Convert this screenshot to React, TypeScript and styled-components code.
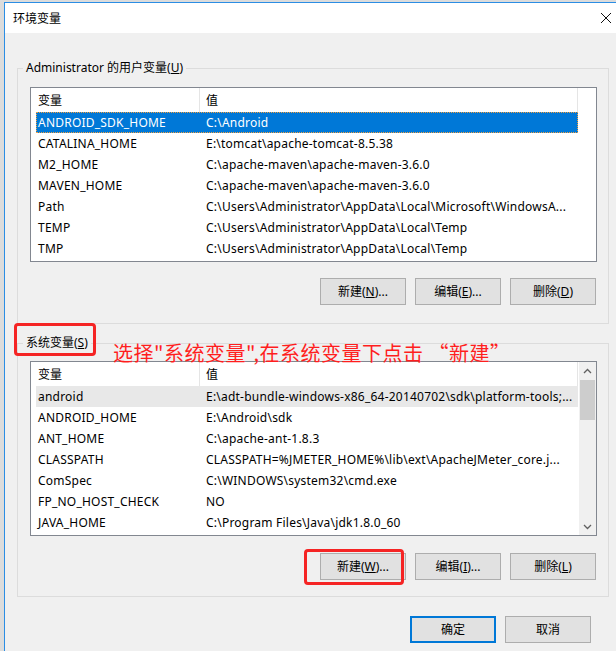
import React from "react";
import styled, { createGlobalStyle } from "styled-components";

const GlobalStyle = createGlobalStyle`
  html, body { margin: 0; padding: 0; }
  body {
    background: #dcdcdc;
    font-family: "Microsoft YaHei UI", "Noto Sans", "Noto Sans CJK SC", sans-serif;
    font-size: 12px;
    color: #000;
  }
  * { box-sizing: border-box; }
`;

const Screen = styled.div`
  width: 616px;
  height: 651px;
  padding: 2px 0 0 4px;
  overflow: hidden;
`;

const Dialog = styled.div`
  width: 612px;
  height: 649px;
  background: #f0f0f0;
  border-left: 1px solid #2b8de4;
  border-top: 1px solid #2b8de4;
  display: flex;
  flex-direction: column;
`;

const TitleBar = styled.div`
  height: 30px;
  background: #fff;
  display: flex;
  align-items: center;
  justify-content: space-between;
  padding: 0 4px 0 8px;
  font-size: 12px;
  flex-shrink: 0;
`;

const TitleText = styled.span`
  line-height: 16px;
  padding-top: 1px;
`;

const CloseIcon = styled.svg`
  width: 12px;
  height: 12px;
  display: block;
`;

const Body = styled.div`
  padding: 27px 7px 0 12px;
  display: flex;
  flex-direction: column;
`;

const Group = styled.fieldset<{ $gap?: number }>`
  margin: ${(p) => p.$gap ?? 0}px 0 0 0;
  padding: 0;
  border: 1px solid #dcdcdc;
  min-width: 0;
  width: 592px;
`;

const Legend = styled.legend`
  margin-left: 5px;
  padding: 0 3px;
  font-size: 12px;
  line-height: 16px;
  position: relative;
`;

const GroupContent = styled.div<{ $top: number; $bottom: number }>`
  padding: ${(p) => p.$top}px 12px ${(p) => p.$bottom}px 12px;
  display: flex;
  flex-direction: column;
`;

const ListBox = styled.div`
  width: 567px;
  height: 175px;
  border: 1px solid #828790;
  background: #fff;
  display: flex;
  overflow: hidden;
`;

const ListBody = styled.div`
  width: 542px;
  margin-left: 5px;
  display: flex;
  flex-direction: column;
  flex-shrink: 0;
`;

const HeaderRow = styled.div<{ $height: number }>`
  display: grid;
  grid-template-columns: 164px 378px;
  height: ${(p) => p.$height}px;
`;

const HeaderCell = styled.div<{ $pad: number }>`
  border-right: 1px solid #e5e5e5;
  padding-left: ${(p) => p.$pad}px;
  display: flex;
  align-items: center;
  padding-bottom: 1px;
  white-space: nowrap;
`;

const Row = styled.div<{ $state?: "selected" | "inactive" }>`
  display: grid;
  grid-template-columns: 164px 378px;
  height: 21px;
  align-items: center;
  white-space: nowrap;
  background: ${(p) =>
    p.$state === "selected" ? "#0078d7" : p.$state === "inactive" ? "#e8e8e8" : "transparent"};
  color: ${(p) => (p.$state === "selected" ? "#fff" : "#000")};
  outline: ${(p) => (p.$state === "selected" ? "1px dotted #f0a040" : "none")};
  outline-offset: -1px;
`;

const Cell = styled.div<{ $pad: number }>`
  padding-left: ${(p) => p.$pad}px;
  overflow: hidden;
  white-space: nowrap;
  line-height: 21px;
  letter-spacing: 0.22px;
`;

const ScrollBar = styled.div`
  width: 17px;
  margin-left: auto;
  background: #f0f0f0;
  display: flex;
  flex-direction: column;
  flex-shrink: 0;
`;

const ScrollArrow = styled.div`
  height: 17px;
  display: flex;
  align-items: center;
  justify-content: center;
`;

const ScrollTrack = styled.div`
  flex: 1;
  padding: 1px 1px 0 1px;
`;

const Thumb = styled.div`
  height: 40px;
  background: #cdcdcd;
`;

const ButtonRow = styled.div<{ $top: number; $right?: number }>`
  display: flex;
  justify-content: flex-end;
  gap: 9px;
  margin-top: ${(p) => p.$top}px;
  padding-right: ${(p) => p.$right ?? 0}px;
`;

const Button = styled.button<{ $primary?: boolean }>`
  position: relative;
  width: 86px;
  height: 27px;
  background: #e1e1e1;
  border: ${(p) => (p.$primary ? "2px solid #0078d7" : "1px solid #adadad")};
  font-family: inherit;
  font-size: 12px;
  color: #000;
  padding: 0;
  margin: 0;
  line-height: 16px;
`;

const Mark = styled.div`
  position: absolute;
  border: 3px solid #f52424;
  border-radius: 4px;
  pointer-events: none;
`;

const LegendMark = styled(Mark)`
  left: -9px;
  top: -12px;
  width: 82px;
  height: 33px;
`;

const ButtonMark = styled(Mark)`
  left: -17px;
  top: -5px;
  width: 100px;
  height: 36px;
`;

const Annotation = styled.div`
  position: absolute;
  left: 90px;
  top: 8px;
  white-space: nowrap;
  color: #ff1e1e;
  font-family: "Microsoft YaHei", "Noto Sans CJK SC", sans-serif;
  font-size: 20px;
  line-height: 20px;
  letter-spacing: 0.5px;
`;

type Item = [string, string];

const userVars: Item[] = [
  ["ANDROID_SDK_HOME", "C:\\Android"],
  ["CATALINA_HOME", "E:\\tomcat\\apache-tomcat-8.5.38"],
  ["M2_HOME", "C:\\apache-maven\\apache-maven-3.6.0"],
  ["MAVEN_HOME", "C:\\apache-maven\\apache-maven-3.6.0"],
  ["Path", "C:\\Users\\Administrator\\AppData\\Local\\Microsoft\\WindowsA..."],
  ["TEMP", "C:\\Users\\Administrator\\AppData\\Local\\Temp"],
  ["TMP", "C:\\Users\\Administrator\\AppData\\Local\\Temp"],
];

const sysVars: Item[] = [
  ["android", "E:\\adt-bundle-windows-x86_64-20140702\\sdk\\platform-tools;..."],
  ["ANDROID_HOME", "E:\\Android\\sdk"],
  ["ANT_HOME", "C:\\apache-ant-1.8.3"],
  ["CLASSPATH", "CLASSPATH=%JMETER_HOME%\\lib\\ext\\ApacheJMeter_core.j..."],
  ["ComSpec", "C:\\WINDOWS\\system32\\cmd.exe"],
  ["FP_NO_HOST_CHECK", "NO"],
  ["JAVA_HOME", "C:\\Program Files\\Java\\jdk1.8.0_60"],
];

const Chevron = ({ up }: { up?: boolean }) => (
  <svg width="9" height="6" viewBox="0 0 9 6">
    <polyline
      points={up ? "1,5 4.5,1.5 8,5" : "1,1 4.5,4.5 8,1"}
      fill="none"
      stroke="#606060"
      strokeWidth="1.3"
    />
  </svg>
);

const VarList = ({
  items,
  selected,
  scroll,
  headerHeight,
}: {
  items: Item[];
  selected: "selected" | "inactive";
  scroll?: boolean;
  headerHeight: number;
}) => (
  <ListBox>
    <ListBody>
      <HeaderRow $height={headerHeight}>
        <HeaderCell $pad={2}>变量</HeaderCell>
        <HeaderCell $pad={6}>值</HeaderCell>
      </HeaderRow>
      {items.map(([k, v], i) => (
        <Row key={k} $state={i === 0 ? selected : undefined}>
          <Cell $pad={2}>{k}</Cell>
          <Cell $pad={6}>{v}</Cell>
        </Row>
      ))}
    </ListBody>
    {scroll && (
      <ScrollBar>
        <ScrollArrow>
          <Chevron up />
        </ScrollArrow>
        <ScrollTrack>
          <Thumb />
        </ScrollTrack>
        <ScrollArrow>
          <Chevron />
        </ScrollArrow>
      </ScrollBar>
    )}
  </ListBox>
);

export default function App() {
  return (
    <>
      <GlobalStyle />
      <Screen>
        <Dialog>
          <TitleBar>
            <TitleText>环境变量</TitleText>
            <CloseIcon viewBox="0 0 12 12">
              <line x1="1" y1="1" x2="11" y2="11" stroke="#111" strokeWidth="1" />
              <line x1="11" y1="1" x2="1" y2="11" stroke="#111" strokeWidth="1" />
            </CloseIcon>
          </TitleBar>
          <Body>
            <Group>
              <Legend>
                Administrator 的用户变量(<u>U</u>)
              </Legend>
              <GroupContent $top={11} $bottom={18}>
                <VarList items={userVars} selected="selected" headerHeight={24} />
                <ButtonRow $top={16}>
                  <Button>
                    新建(<u>N</u>)...
                  </Button>
                  <Button>
                    编辑(<u>E</u>)...
                  </Button>
                  <Button>
                    删除(<u>D</u>)
                  </Button>
                </ButtonRow>
              </GroupContent>
            </Group>
            <Group $gap={11}>
              <Legend>
                系统变量(<u>S</u>)
                <LegendMark />
                <Annotation>选择"系统变量",在系统变量下点击 “新建”</Annotation>
              </Legend>
              <GroupContent $top={10} $bottom={16}>
                <VarList items={sysVars} selected="inactive" scroll headerHeight={24} />
                <ButtonRow $top={17}>
                  <Button>
                    新建(<u>W</u>)...
                    <ButtonMark />
                  </Button>
                  <Button>
                    编辑(<u>I</u>)...
                  </Button>
                  <Button>
                    删除(<u>L</u>)
                  </Button>
                </ButtonRow>
              </GroupContent>
            </Group>
            <ButtonRow $top={19} $right={18}>
              <Button $primary>确定</Button>
              <Button>取消</Button>
            </ButtonRow>
          </Body>
        </Dialog>
      </Screen>
    </>
  );
}
